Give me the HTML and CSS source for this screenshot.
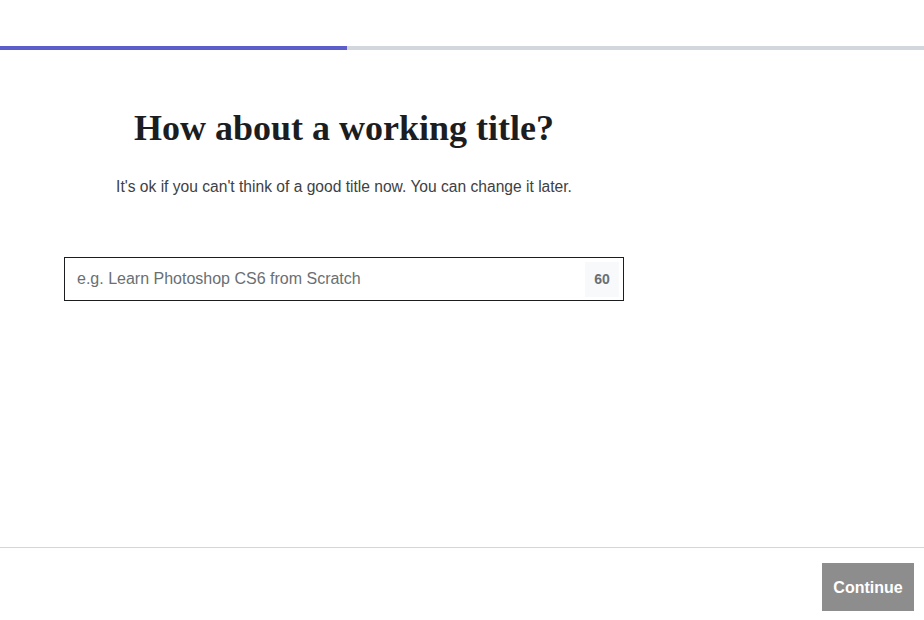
FILE: index.html
```html
<!DOCTYPE html>
<html lang="en">
<head>
<meta charset="utf-8">
<title>Working title</title>
<link rel="stylesheet" href="styles.css">
</head>
<body>
<div class="page">
  <div class="progress"><div class="progress-fill" style="width: 347px"></div></div>
  <main class="main">
    <section class="step">
      <h1 class="title">How about a working title?</h1>
      <p class="subtitle">It's ok if you can't think of a good title now. You can change it later.</p>
      <div class="field">
        <input class="field-input" type="text" placeholder="e.g. Learn Photoshop CS6 from Scratch">
        <span class="counter">60</span>
      </div>
    </section>
  </main>
  <footer class="footer">
    <button class="continue" type="button">Continue</button>
  </footer>
</div>
</body>
</html>
```
FILE: styles.css
```css
html, body {
  margin: 0;
  padding: 0;
  background: #fff;
}
body {
  font-family: "Liberation Sans", Arial, sans-serif;
  color: #1c1d1f;
}
.page {
  display: flex;
  flex-direction: column;
  min-height: 100vh;
  height: 620px;
}
.progress {
  margin-top: 46px;
  height: 4px;
  background: #d1d7dc;
}
.progress-fill {
  height: 100%;
  background: #5c5ecc;
}
.main {
  flex: 1;
  padding-left: 64px;
}
.step {
  width: 560px;
  display: flex;
  flex-direction: column;
  align-items: center;
}
.title {
  margin: 56px 0 0;
  font-family: "Liberation Serif", "Times New Roman", serif;
  font-weight: 700;
  font-size: 36px;
  line-height: 44px;
  color: #1c1d1f;
}
.subtitle {
  margin: 26px 0 0;
  font-size: 15.6px;
  line-height: 22px;
  color: #3e4143;
}
.field {
  margin-top: 59px;
  align-self: stretch;
  height: 44px;
  box-sizing: border-box;
  border: 1px solid #1c1d1f;
  display: flex;
  align-items: center;
  padding: 0 4px 0 12px;
}
.field-input {
  flex: 1;
  border: 0;
  outline: 0;
  padding: 0;
  font-family: "Liberation Sans", Arial, sans-serif;
  font-size: 16px;
  color: #1c1d1f;
  background: transparent;
}
.field-input::placeholder {
  color: #6a6f73;
  opacity: 1;
}
.counter {
  width: 34px;
  height: 35px;
  display: flex;
  align-items: center;
  justify-content: center;
  background: #f7f9fa;
  color: #6a6f73;
  font-weight: 700;
  font-size: 14px;
}
.footer {
  height: 73px;
  box-sizing: border-box;
  border-top: 1px solid #d1d7dc;
  display: flex;
  justify-content: flex-end;
  align-items: flex-start;
  padding: 15px 10px 0 0;
}
.continue {
  width: 92px;
  height: 48px;
  padding: 2px 0 0;
  border: 0;
  background: #8d8d8d;
  color: #fff;
  font-family: "Liberation Sans", Arial, sans-serif;
  font-weight: 700;
  font-size: 16px;
}
```
